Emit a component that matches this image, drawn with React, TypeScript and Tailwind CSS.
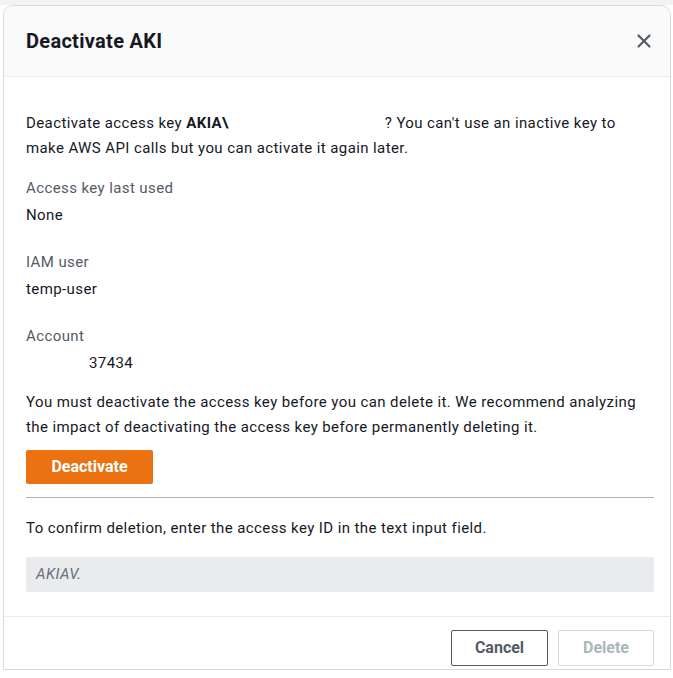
import { X } from 'lucide-react';

function Field({ label, value, children }: { label: string; value?: string; children?: React.ReactNode }) {
    return (
        <div className="mb-[20px]">
            <div className="text-[#545b64] leading-[27px]">{label}</div>
            <div className="text-[#16191f] leading-[27px]">{children ?? value}</div>
        </div>
    );
}

export default function App() {
    return (
        <div
            className="relative w-[673px] h-[678px] bg-white overflow-hidden text-[15px] tracking-[0.4px] text-[#16191f]"
            style={{ fontFamily: 'Roboto, "Liberation Sans", sans-serif' }}
        >
            <div className="h-[5px] bg-[#f2f3f3]" />
            <div className="ml-[3px] mr-[2px] h-[665px] flex flex-col border border-[#d5dbdb] rounded-t-[10px] bg-white overflow-hidden">
                <div className="h-[71px] shrink-0 flex items-center justify-between pl-[22px] pr-[15px] bg-[#fafafa] border-b border-[#eaeded]">
                    <h2 className="text-[20px] font-bold text-[#16191f] tracking-[0.3px]">Deactivate AKI</h2>
                    <X size={22} strokeWidth={2.4} className="text-[#545b64]" />
                </div>

                <div className="flex-1 pl-[22px] pr-[16px] pt-[34px]">
                    <p className="leading-[25px] mb-[14px]">
                        Deactivate access key <span className="font-bold mr-[156px]">AKIA\</span>? You can't use an inactive key to make AWS API calls but you can activate it again later.
                    </p>

                    <Field label="Access key last used" value="None" />
                    <Field label="IAM user" value="temp-user" />
                    <Field label="Account">
                        <span className="pl-[63px]">37434</span>
                    </Field>

                    <p className="leading-[25px] -mt-[7px] mb-[10px]">
                        You must deactivate the access key before you can delete it. We recommend analyzing the impact of deactivating the access key before permanently deleting it.
                    </p>

                    <button className="h-[34px] w-[127px] bg-[#ec7211] text-white text-[16px] font-bold rounded-[2px] tracking-normal">
                        Deactivate
                    </button>

                    <div className="mt-[13px] border-t border-[#aab7b8]" />

                    <p className="mt-[18px] leading-[25px]">
                        To confirm deletion, enter the access key ID in the text input field.
                    </p>

                    <div className="mt-[16px] h-[35px] bg-[#e9ebed] rounded-[2px] flex items-center px-[10px] italic text-[#687078]">
                        AKIAV.
                    </div>
                </div>

                <div className="h-[53px] shrink-0 border-t border-[#eaeded] flex items-start justify-end gap-[10px] pt-[13px] pr-[16px]">
                    <button className="h-[36px] w-[97px] border border-[#545b64] rounded-[2px] text-[16px] font-bold text-[#545b64] tracking-normal">
                        Cancel
                    </button>
                    <button className="h-[36px] w-[96px] border border-[#d5dbdb] rounded-[2px] text-[16px] font-bold text-[#aab7b8] tracking-normal">
                        Delete
                    </button>
                </div>
            </div>
        </div>
    );
}
